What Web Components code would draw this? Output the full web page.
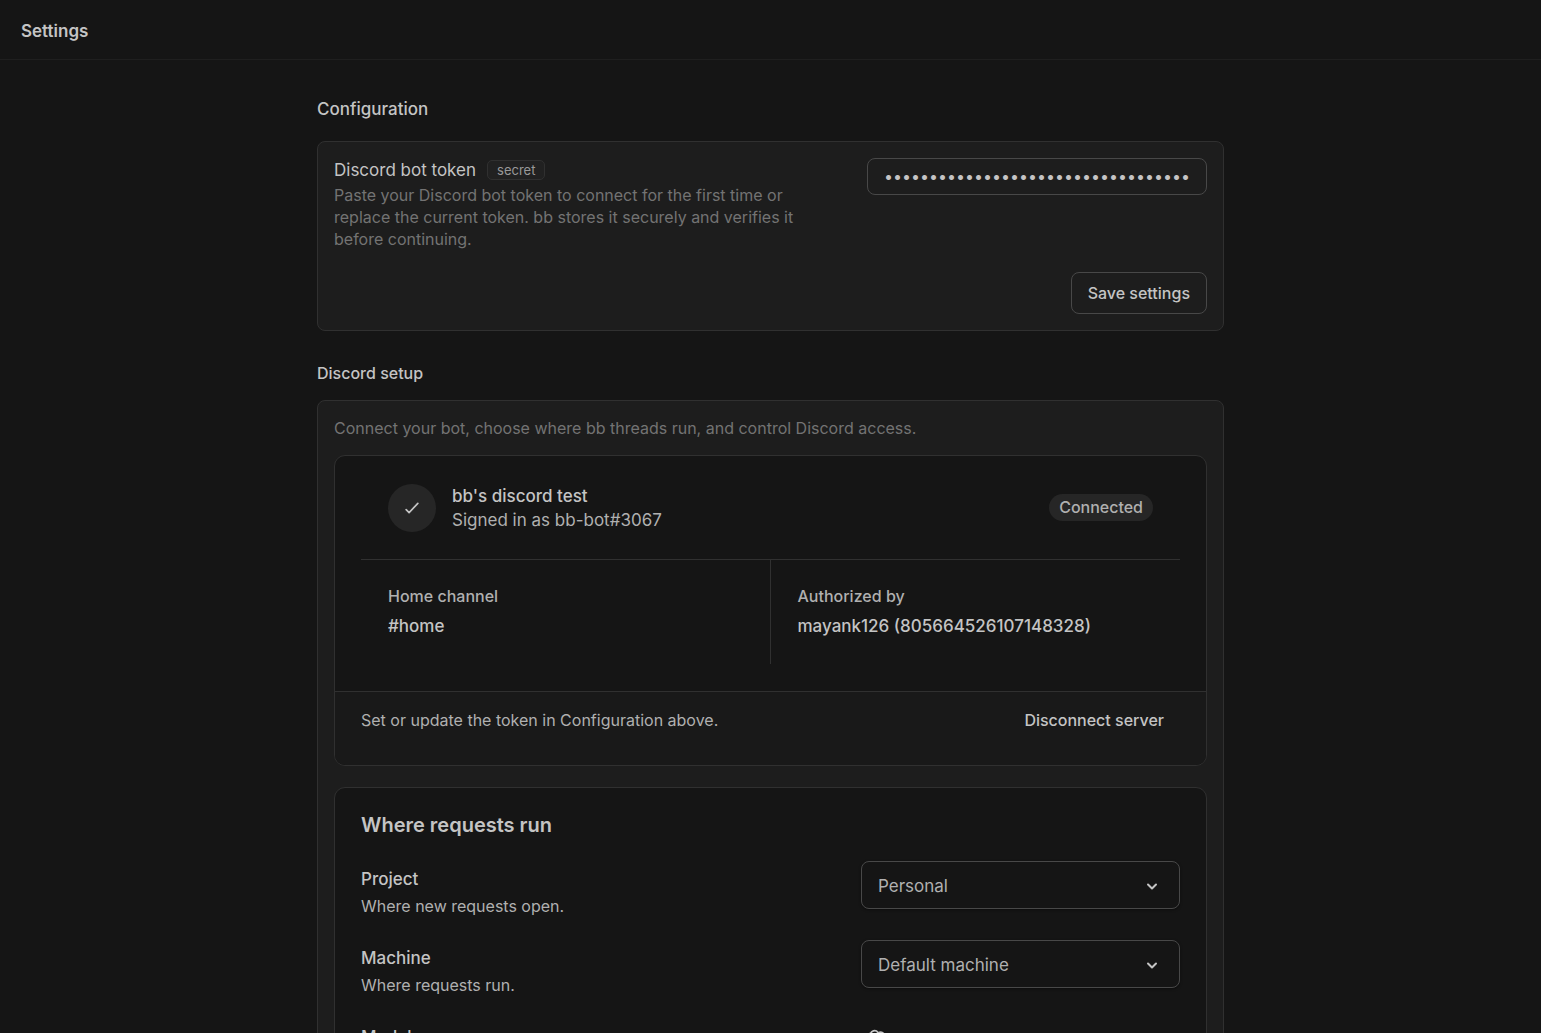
<!DOCTYPE html>
<html lang="en">
<head>
<meta charset="utf-8">
<meta name="viewport" content="width=device-width, initial-scale=1">
<title>Settings</title>
<style>
    :root {
        --bg: #151515;
        --panel: #1d1d1d;
        --foot: #191919;
        --fill: #262626;
        --line: #303030;
        --control: #484848;
        --text: #c4c4c4;
        --soft: #b0b0b0;
        --muted: #737373;
        --small: 16px;
        --base: 17px;
        --large: 20px;
    }
    html { background: var(--bg); }
    body {
        margin: 0;
        height: 100vh;
        overflow: hidden;
        color: var(--text);
        font: 400 var(--small)/22px Inter, "Liberation Sans", sans-serif;
    }
</style>
</head>
<body>
<settings-page>
    <settings-section heading="Configuration" size="base">
        <token-form></token-form>
    </settings-section>
    <settings-section heading="Discord setup">
        <discord-setup></discord-setup>
    </settings-section>
</settings-page>

<script>
// attaches an open shadow root and fills it from a template
function render(host, html) {
    let template = document.createElement('template');
    template.innerHTML = html;
    host.attachShadow({mode: 'open'})
        .appendChild(template.content.cloneNode(true));
}

customElements.define('settings-page',
class extends HTMLElement {
    constructor() {
        super();
        render(this, `
        <style>
            :host { display: block; }
            header {
                box-sizing: border-box;
                height: 60px;
                padding: 19px 21px;
                border-bottom: 1px solid #1f1f1f;
            }
            h1 {
                margin: 0;
                font-size: var(--base);
                line-height: 24px;
                font-weight: 600;
            }
            main {
                display: flex;
                flex-direction: column;
                gap: 31px;
                max-width: 907px;
                margin: 0 auto;
                padding: 36px 24px;
            }
        </style>
        <header><h1>Settings</h1></header>
        <main><slot></slot></main>
        `);
    }
});

customElements.define('settings-section',
class extends HTMLElement {
    constructor() {
        super();
        let size = this.getAttribute('size') || 'small';
        render(this, `
        <style>
            :host { display: block; }
            h2 {
                margin: 0 0 16px;
                font-size: var(--${size});
                line-height: 22px;
                font-weight: 500;
            }
            h2.base { line-height: 26px; margin-bottom: 19px; }
            .panel {
                padding: 16px;
                background: var(--panel);
                border: 1px solid var(--line);
                border-radius: 8px;
            }
        </style>
        <section>
            <h2 class="${size}">${this.getAttribute('heading')}</h2>
            <div class="panel"><slot></slot></div>
        </section>
        `);
    }
});

customElements.define('token-form',
class extends HTMLElement {
    constructor() {
        super();
        render(this, `
        <style>
            :host { display: block; }
            .row {
                display: flex;
                justify-content: space-between;
                align-items: flex-start;
                gap: 48px;
            }
            .info { flex: 1; max-width: 480px; }
            .title {
                display: flex;
                align-items: center;
                gap: 11px;
                line-height: 24px;
            }
            label { font-size: var(--base); }
            .tag {
                padding: 0 9px;
                border: 1px solid var(--line);
                border-radius: 5px;
                background: #212121;
                color: #999;
                font-size: 13px;
                line-height: 18px;
            }
            p { margin: 2px 0 0; color: var(--muted); }
            input {
                box-sizing: border-box;
                width: 340px;
                height: 37px;
                padding: 0 16px 2px;
                border: 1px solid var(--control);
                border-radius: 8px;
                background: none;
                color: inherit;
                font: inherit;
                outline: none;
            }
            .actions {
                display: flex;
                justify-content: flex-end;
                margin-top: 22px;
            }
            button {
                height: 42px;
                padding: 0 16px;
                border: 1px solid var(--control);
                border-radius: 8px;
                background: none;
                color: inherit;
                font: inherit;
                font-weight: 500;
            }
        </style>
        <form>
            <div class="row">
                <div class="info">
                    <div class="title">
                        <label for="token">Discord bot token</label>
                        <span class="tag">secret</span>
                    </div>
                    <p id="hint">Paste your Discord bot token to connect for the first time or replace the current token. bb stores it securely and verifies it before continuing.</p>
                </div>
                <input id="token" type="password" aria-describedby="hint" autocomplete="off">
            </div>
            <div class="actions"><button type="button">Save settings</button></div>
        </form>
        `);
        this.shadowRoot.querySelector('input').value = '0'.repeat(34);
    }
});

customElements.define('discord-setup',
class extends HTMLElement {
    constructor() {
        super();
        render(this, `
        <style>
            :host { display: block; }
            p { margin: 0; color: var(--muted); }
            .cards {
                display: flex;
                flex-direction: column;
                gap: 21px;
                margin-top: 16px;
            }
        </style>
        <p>Connect your bot, choose where bb threads run, and control Discord access.</p>
        <div class="cards">
            <server-card></server-card>
            <request-card>
                <select-row name="Project" hint="Where new requests open.">
                    <option>Personal</option>
                </select-row>
                <select-row name="Machine" hint="Where requests run.">
                    <option>Default machine</option>
                </select-row>
                <model-row></model-row>
            </request-card>
        </div>
        `);
    }
});

customElements.define('server-card',
class extends HTMLElement {
    constructor() {
        super();
        render(this, `
        <style>
            :host {
                display: block;
                overflow: hidden;
                background: var(--bg);
                border: 1px solid var(--line);
                border-radius: 11px;
            }
            .body { padding: 0 26px 27px; }
            .server {
                display: flex;
                align-items: center;
                gap: 16px;
                padding: 27px;
                border-bottom: 1px solid var(--line);
            }
            .mark {
                display: flex;
                align-items: center;
                justify-content: center;
                width: 48px;
                height: 48px;
                border-radius: 50%;
                background: var(--fill);
            }
            .who {
                flex: 1;
                padding-top: 1px;
                font-size: var(--base);
                line-height: 24px;
            }
            h3 { margin: 0; font: inherit; font-weight: 500; }
            .who p { margin: 0; color: var(--soft); }
            .badge {
                padding: 0 10px;
                border-radius: 14px;
                background: var(--fill);
                color: var(--soft);
                font-weight: 500;
                line-height: 27px;
            }
            dl {
                display: grid;
                grid-template-columns: 1fr 1fr;
                margin: 0;
            }
            dl div { padding: 25px 27px; }
            dl div:first-child { border-right: 1px solid var(--line); }
            dt { color: var(--soft); font-weight: 500; }
            dd {
                margin: 7px 0 0;
                font-size: var(--base);
                font-weight: 500;
                line-height: 25px;
            }
            footer {
                display: flex;
                justify-content: space-between;
                align-items: flex-start;
                padding: 8px 26px 25px;
                border-top: 1px solid var(--line);
                background: var(--foot);
                color: var(--soft);
                line-height: 40px;
            }
            button {
                padding: 0 16px;
                border: 0;
                background: none;
                color: var(--text);
                font: inherit;
                font-weight: 500;
            }
        </style>
        <div class="body">
            <div class="server">
                <span class="mark">
                    <svg width="20" height="20" viewBox="0 0 24 24" fill="none" stroke="currentColor" stroke-width="2" stroke-linecap="round" stroke-linejoin="round" aria-hidden="true"><path d="M5 14l3.500 3.500L19 6.500"/></svg>
                </span>
                <div class="who">
                    <h3>bb's discord test</h3>
                    <p>Signed in as bb-bot#3067</p>
                </div>
                <span class="badge">Connected</span>
            </div>
            <dl>
                <div><dt>Home channel</dt><dd>#home</dd></div>
                <div><dt>Authorized by</dt><dd>mayank126 (805664526107148328)</dd></div>
            </dl>
        </div>
        <footer>
            <span>Set or update the token in Configuration above.</span>
            <button type="button">Disconnect server</button>
        </footer>
        `);
    }
});

customElements.define('request-card',
class extends HTMLElement {
    constructor() {
        super();
        render(this, `
        <style>
            :host {
                display: block;
                padding: 24px 26px;
                background: var(--bg);
                border: 1px solid var(--line);
                border-radius: 11px;
            }
            h3 {
                margin: 0 0 22px;
                font-size: var(--large);
                font-weight: 600;
                line-height: 27px;
            }
            .rows {
                display: flex;
                flex-direction: column;
                gap: 23px;
            }
        </style>
        <h3>Where requests run</h3>
        <div class="rows"><slot></slot></div>
        `);
    }
});

const rowStyle = `
    :host {
        display: flex;
        justify-content: space-between;
        align-items: flex-start;
        gap: 24px;
        min-height: 56px;
    }
    .text { padding-top: 6px; }
    label, .name {
        display: block;
        font-size: var(--base);
        font-weight: 500;
        line-height: 25px;
    }
    p { margin: 3px 0 0; color: var(--soft); }
`;

customElements.define('select-row',
class extends HTMLElement {
    constructor() {
        super();
        render(this, `
        <style>
            ${rowStyle}
            .field {
                display: grid;
                align-items: center;
                width: 319px;
            }
            .field > * { grid-area: 1 / 1; }
            select {
                appearance: none;
                box-sizing: border-box;
                width: 100%;
                height: 48px;
                padding: 2px 48px 0 16px;
                border: 1px solid var(--control);
                border-radius: 8px;
                background: none;
                box-shadow: 0 1px 3px #0006;
                color: var(--soft);
                font: inherit;
                font-size: var(--base);
            }
            svg {
                justify-self: end;
                margin: 2px 20px 0 0;
                pointer-events: none;
            }
        </style>
        <div class="text">
            <label for="choice">${this.getAttribute('name')}</label>
            <p>${this.getAttribute('hint')}</p>
        </div>
        <div class="field">
            <select id="choice"></select>
            <svg width="16" height="16" viewBox="0 0 16 16" fill="none" stroke="currentColor" stroke-width="2" stroke-linecap="round" stroke-linejoin="round" aria-hidden="true"><path d="M4 6.500l4 4 4-4"/></svg>
        </div>
        `);
        this.shadowRoot.querySelector('select').append(...this.querySelectorAll('option'));
    }
});

customElements.define('model-row',
class extends HTMLElement {
    constructor() {
        super();
        render(this, `
        <style>
            ${rowStyle}
            button {
                width: 319px;
                padding: 10px 4px;
                border: 0;
                background: none;
                color: var(--text);
                text-align: left;
            }
            svg { display: block; }
        </style>
        <div class="text"><span class="name">Model</span></div>
        <button type="button" aria-label="Choose a model">
            <svg width="22" height="22" viewBox="0 0 24 24" fill="none" stroke="currentColor" stroke-width="2" aria-hidden="true"><path d="M6 12V6a4.500 4.500 0 0 1 8-2.500M10 7l4.500-2.600a4.500 4.500 0 0 1 6 6.600M15 9.500l3.500 2a4.500 4.500 0 0 1-1 8M18 12v6a4.500 4.500 0 0 1-8 2.500M14 17l-4.500 2.600a4.500 4.500 0 0 1-6-6.600M9 14.500l-3.500-2a4.500 4.500 0 0 1 1-8"/></svg>
        </button>
        `);
    }
});
</script>
</body>
</html>
